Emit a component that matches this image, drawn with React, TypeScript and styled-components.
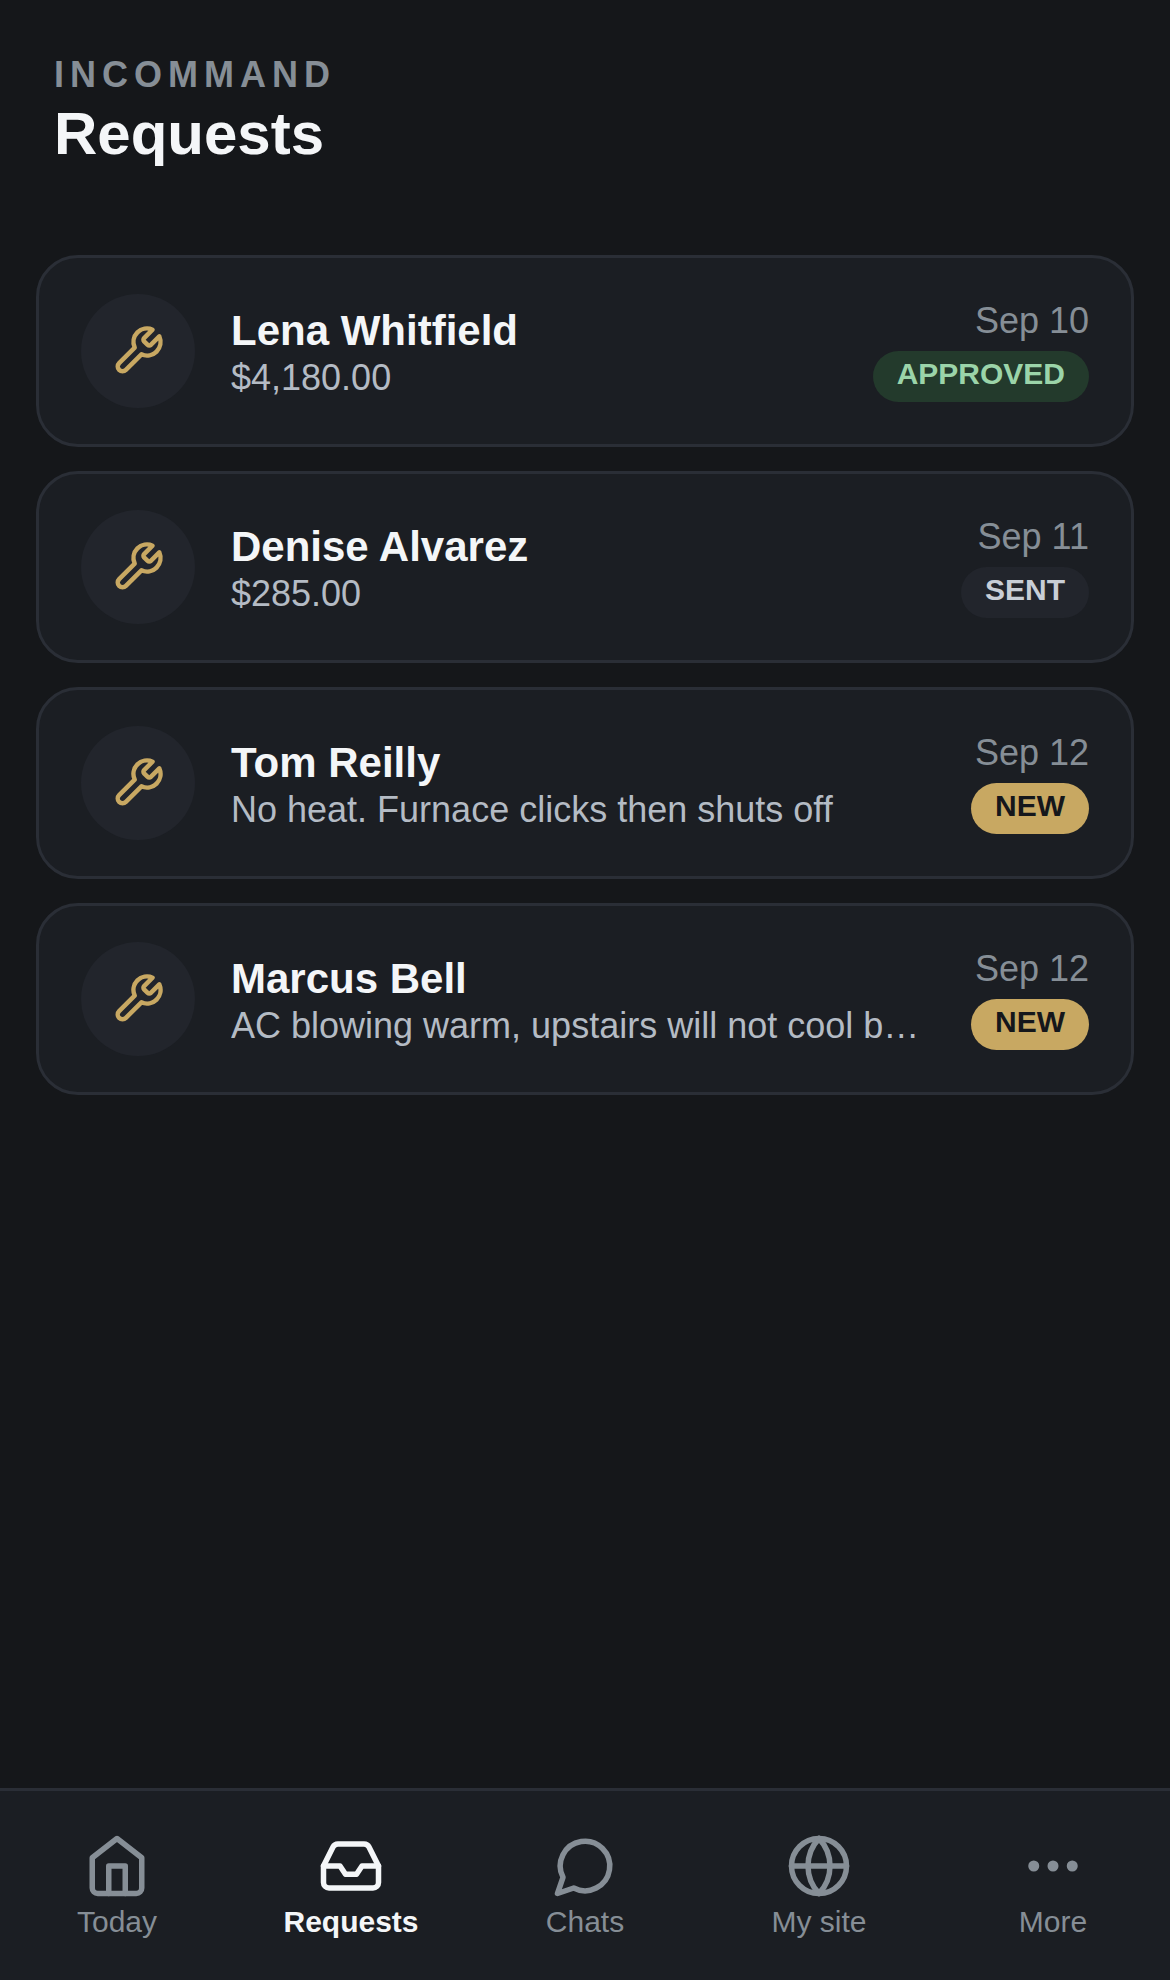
import styled, { createGlobalStyle } from 'styled-components';
import { Ellipsis, Globe, Inbox } from 'lucide-react';
import type { ReactNode } from 'react';

type Status = 'approved' | 'sent' | 'new';

interface RequestItem {
	name: string;
	detail: string;
	date: string;
	status: Status;
}

const requests: RequestItem[] = [
	{ name: 'Lena Whitfield', detail: '$4,180.00', date: 'Sep 10', status: 'approved' },
	{ name: 'Denise Alvarez', detail: '$285.00', date: 'Sep 11', status: 'sent' },
	{ name: 'Tom Reilly', detail: 'No heat. Furnace clicks then shuts off', date: 'Sep 12', status: 'new' },
	{ name: 'Marcus Bell', detail: 'AC blowing warm, upstairs will not cool bedrooms at night', date: 'Sep 12', status: 'new' },
];

const pillColors: Record<Status, { bg: string; fg: string }> = {
	approved: { bg: '#233a2c', fg: '#9bd4a9' },
	sent: { bg: '#22252c', fg: '#c8ced6' },
	new: { bg: '#c8a862', fg: '#15171b' },
};

const GlobalStyle = createGlobalStyle`
	body {
		margin: 0;
		background-color: #15171a;
		font-family: "Liberation Sans", Arial, sans-serif;
	}
`;

const Page = styled.div`
	height: 1980px;
	display: flex;
	flex-direction: column;
	background-color: #15171a;
`;

const Header = styled.header`
	padding: 54px 54px 0;
	height: 255px;
	box-sizing: border-box;
`;

const Brand = styled.div`
	font-size: 36px;
	line-height: 42px;
	font-weight: 700;
	letter-spacing: 6px;
	color: #868e96;
`;

const Title = styled.h1`
	margin: 3px 0 0;
	font-size: 60px;
	line-height: 69px;
	font-weight: 700;
	color: #f4f6f8;
`;

const List = styled.main`
	flex: 1;
	display: flex;
	flex-direction: column;
	gap: 24px;
	padding: 0 36px;
`;

const Card = styled.article`
	height: 192px;
	box-sizing: border-box;
	display: flex;
	align-items: center;
	gap: 36px;
	padding: 0 42px;
	background-color: #1b1e23;
	border: 3px solid #2a2e36;
	border-radius: 42px;
`;

const IconCircle = styled.div`
	width: 114px;
	height: 114px;
	flex-shrink: 0;
	display: flex;
	align-items: center;
	justify-content: center;
	border-radius: 50%;
	background-color: #22252c;
	color: #c8a862;
`;

const Body = styled.div`
	flex: 1;
	min-width: 0;
	padding-top: 4px;
`;

const Name = styled.div`
	font-size: 42px;
	line-height: 48px;
	font-weight: 700;
	color: #f4f6f8;
`;

const Detail = styled.div`
	margin-top: 2px;
	font-size: 36px;
	line-height: 42px;
	color: #b4bbc4;
	white-space: nowrap;
	overflow: hidden;
	text-overflow: ellipsis;
`;

const Meta = styled.div`
	flex-shrink: 0;
	display: flex;
	flex-direction: column;
	align-items: flex-end;
	gap: 9px;
`;

const DateText = styled.div`
	font-size: 36px;
	line-height: 42px;
	color: #868e96;
`;

const Pill = styled.span<{ $status: Status }>`
	box-sizing: border-box;
	padding: 0 24px 6px;
	height: 51px;
	display: flex;
	align-items: center;
	border-radius: 26px;
	font-size: 30px;
	font-weight: 700;
	background-color: ${(p) => pillColors[p.$status].bg};
	color: ${(p) => pillColors[p.$status].fg};
`;

const Nav = styled.nav`
	height: 192px;
	box-sizing: border-box;
	display: grid;
	grid-template-columns: repeat(5, 1fr);
	padding-top: 42px;
	background-color: #1b1e23;
	border-top: 3px solid #2a2e36;
`;

const NavItem = styled.div<{ $active?: boolean }>`
	display: flex;
	flex-direction: column;
	align-items: center;
	gap: 6px;
	font-size: 30px;
	line-height: 34px;
	font-weight: ${(p) => (p.$active ? 700 : 400)};
	color: ${(p) => (p.$active ? '#f4f6f8' : '#868e96')};
`;

const OutlineIcon = styled.svg.attrs({
	viewBox: '0 0 24 24',
	fill: 'none',
	stroke: 'currentColor',
	strokeWidth: 2,
	strokeLinecap: 'round',
	strokeLinejoin: 'round',
})<{ $size: number }>`
	width: ${(p) => p.$size}px;
	height: ${(p) => p.$size}px;
	flex-shrink: 0;
`;

// the outlines below are older than the ones lucide-react ships now
function HomeIcon() {
	return (
		<OutlineIcon $size={66}>
			<path d="m3 9 9-7 9 7v11a2 2 0 0 1-2 2H5a2 2 0 0 1-2-2z" />
			<polyline points="9 22 9 12 15 12 15 22" />
		</OutlineIcon>
	);
}

function ChatIcon() {
	return (
		<OutlineIcon $size={66}>
			<path d="M7.9 20A9 9 0 1 0 4 16.1L2 22Z" />
		</OutlineIcon>
	);
}

function WrenchIcon() {
	return (
		<OutlineIcon $size={54}>
			<path d="M14.7 6.3a1 1 0 0 0 0 1.4l1.6 1.6a1 1 0 0 0 1.4 0l3.77-3.77a6 6 0 0 1-7.94 7.94l-6.91 6.91a2.12 2.12 0 0 1-3-3l6.91-6.91a6 6 0 0 1 7.94-7.94l-3.76 3.76z" />
		</OutlineIcon>
	);
}

const tabs: { label: string; icon: ReactNode; active?: boolean }[] = [
	{ label: 'Today', icon: <HomeIcon /> },
	{ label: 'Requests', icon: <Inbox size={66} strokeWidth={2} />, active: true },
	{ label: 'Chats', icon: <ChatIcon /> },
	{ label: 'My site', icon: <Globe size={66} strokeWidth={2} /> },
	{ label: 'More', icon: <Ellipsis size={66} strokeWidth={2} /> },
];

function App() {
	return (
		<Page>
			<GlobalStyle />
			<Header>
				<Brand>INCOMMAND</Brand>
				<Title>Requests</Title>
			</Header>
			<List>
				{requests.map((item) => (
					<Card key={item.name}>
						<IconCircle>
							<WrenchIcon />
						</IconCircle>
						<Body>
							<Name>{item.name}</Name>
							<Detail>{item.detail}</Detail>
						</Body>
						<Meta>
							<DateText>{item.date}</DateText>
							<Pill $status={item.status}>{item.status.toUpperCase()}</Pill>
						</Meta>
					</Card>
				))}
			</List>
			<Nav>
				{tabs.map((tab) => (
					<NavItem key={tab.label} $active={tab.active}>
						{tab.icon}
						{tab.label}
					</NavItem>
				))}
			</Nav>
		</Page>
	);
}

export default App;
